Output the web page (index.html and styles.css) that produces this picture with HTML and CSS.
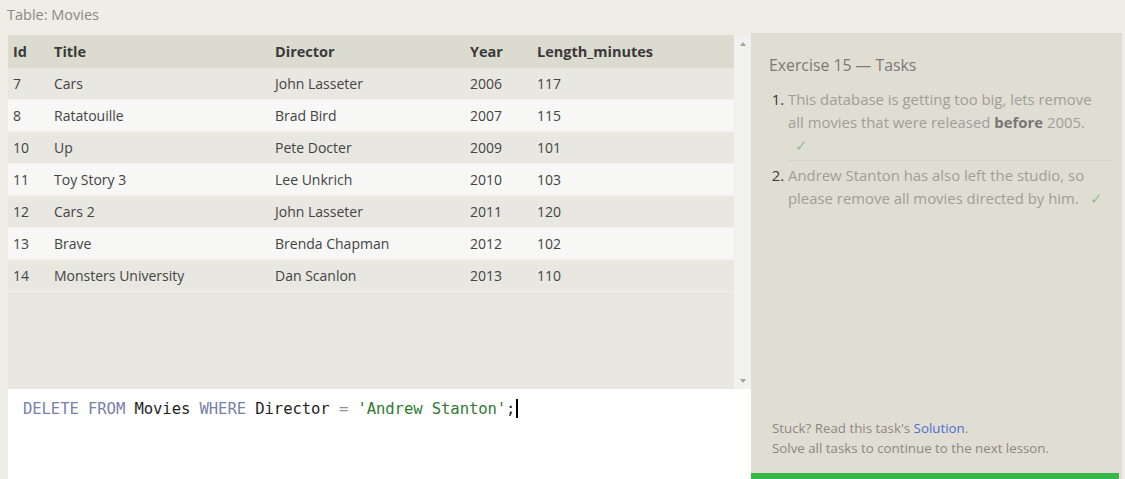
FILE: index.html
```html
<!DOCTYPE html>
<html>
<head>
<meta charset="utf-8">
<link rel="stylesheet" href="styles.css">
</head>
<body>
<div class="page">
  <div class="caption">Table: Movies</div>
  <div class="main">
    <div class="left">
      <div class="results">
        <div class="table-wrap">
          <div class="row head">
            <div class="c c1">Id</div><div class="c c2">Title</div><div class="c c3">Director</div><div class="c c4">Year</div><div class="c c5">Length_minutes</div>
          </div>
          <div class="row odd"><div class="c c1">7</div><div class="c c2">Cars</div><div class="c c3">John Lasseter</div><div class="c c4">2006</div><div class="c c5">117</div></div>
          <div class="row even"><div class="c c1">8</div><div class="c c2">Ratatouille</div><div class="c c3">Brad Bird</div><div class="c c4">2007</div><div class="c c5">115</div></div>
          <div class="row odd"><div class="c c1">10</div><div class="c c2">Up</div><div class="c c3">Pete Docter</div><div class="c c4">2009</div><div class="c c5">101</div></div>
          <div class="row even"><div class="c c1">11</div><div class="c c2">Toy Story 3</div><div class="c c3">Lee Unkrich</div><div class="c c4">2010</div><div class="c c5">103</div></div>
          <div class="row odd"><div class="c c1">12</div><div class="c c2">Cars 2</div><div class="c c3">John Lasseter</div><div class="c c4">2011</div><div class="c c5">120</div></div>
          <div class="row even"><div class="c c1">13</div><div class="c c2">Brave</div><div class="c c3">Brenda Chapman</div><div class="c c4">2012</div><div class="c c5">102</div></div>
          <div class="row odd"><div class="c c1">14</div><div class="c c2">Monsters University</div><div class="c c3">Dan Scanlon</div><div class="c c4">2013</div><div class="c c5">110</div></div>
        </div>
        <div class="scrollbar">
          <div class="arrow up"></div>
          <div class="arrow down"></div>
        </div>
      </div>
      <div class="editor"><pre class="code"><span class="kw">DELETE</span> <span class="kw">FROM</span> <span class="id">Movies</span> <span class="kw">WHERE</span> <span class="id">Director</span> <span class="op">=</span> <span class="str">'Andrew Stanton'</span><span class="id">;</span><span class="cursor"></span></pre></div>
    </div>
    <div class="panel">
      <div class="panel-body">
        <div class="title">Exercise 15 — Tasks</div>
        <ol class="tasks">
          <li>This database is getting too big, lets remove<br>all movies that were released <b>before</b> 2005.<br><span class="check">✓</span></li>
          <li>Andrew Stanton has also left the studio, so<br>please remove all movies directed by him. <span class="check">✓</span></li>
        </ol>
        <div class="foot">
          <div>Stuck? Read this task's <span class="link">Solution</span>.</div>
          <div>Solve all tasks to continue to the next lesson.</div>
        </div>
      </div>
      <div class="progress"></div>
    </div>
  </div>
</div>
</body>
</html>
```
FILE: styles.css
```css
* { box-sizing: border-box; }
html, body { margin: 0; padding: 0; }
body {
  background: #efede6;
  font-family: "Open Sans", "Noto Sans", sans-serif;
  width: 1125px;
  height: 479px;
  overflow: hidden;
}
.page { display: flex; flex-direction: column; height: 479px; }
.caption {
  height: 35px;
  padding: 5px 0 0 7px;
  font-size: 14.5px;
  color: #8a8883;
}
.main { display: flex; flex: 1; padding-left: 8px; min-height: 0; }
.left { width: 743px; display: flex; flex-direction: column; }
.results { height: 354px; display: flex; background: #e8e7e0; }
.table-wrap { width: 726px; }
.row { display: flex; height: 32px; align-items: center; border-bottom: 1px solid #f2f1ec; }
.row.head { background: #dcdbd0; height: 33px; border-bottom: none; }
.row.odd { background: #e8e7e0; }
.row.even { background: #f7f7f5; }
.c { padding-left: 5px; font-size: 14px; color: #444; }
.head .c { font-weight: 700; color: #3a3a3a; font-size: 14.5px; }
.c1 { width: 41px; }
.c2 { width: 221px; }
.c3 { width: 195px; }
.c4 { width: 67px; }
.c5 { flex: 1; }
.scrollbar {
  width: 17px;
  background: #f1f1f0;
  display: flex;
  flex-direction: column;
  justify-content: space-between;
  align-items: center;
  padding: 7px 0 6px;
}
.arrow { width: 0; height: 0; border-left: 3.5px solid transparent; border-right: 3.5px solid transparent; }
.arrow.up { border-bottom: 4px solid #a3a3a3; }
.arrow.down { border-top: 4px solid #a3a3a3; }
.editor {
  flex: 1;
  background: #fff;
  padding: 9px 0 0 15px;
}
.code {
  margin: 0;
  font-family: "DejaVu Sans Mono", "Liberation Mono", monospace;
  font-size: 15.6px;
  line-height: 22px;
  letter-spacing: -0.1px;
}
.kw { color: #7781ab; }
.id { color: #1e1e1e; }
.op { color: #8e8e9e; }
.str { color: #2f7a2f; }
.cursor { display: inline-block; width: 2px; height: 19px; background: #000; vertical-align: -4px; margin-left: 1px; }
.panel {
  width: 371px;
  margin-top: -2px;
  display: flex;
  flex-direction: column;
  background: #e0ddd3;
}
.panel-body { flex: 1; padding: 21px 10px 0 18px; display: flex; flex-direction: column; }
.title { font-size: 15.8px; color: #7b7a76; margin-bottom: 12px; }
.tasks { margin: 0; padding: 0 0 0 19px; font-size: 14.9px; line-height: 23px; color: #a09e98; white-space: nowrap; }
.tasks li { padding: 0 0 3px 0; }
.tasks li + li { border-top: 1px solid #d4d1c6; padding-top: 3px; }
.tasks li::marker { color: #3a3a3a; }
.tasks b { color: #787672; }
.check { color: #8fc28f; margin-left: 7px; }
.foot { margin-top: auto; padding: 0 0 15px 3px; font-size: 13.3px; line-height: 20px; color: #8a8883; }
.link { color: #4d6fd6; }
.progress { height: 6px; background: #3ab54a; margin-right: 3px; }
```
